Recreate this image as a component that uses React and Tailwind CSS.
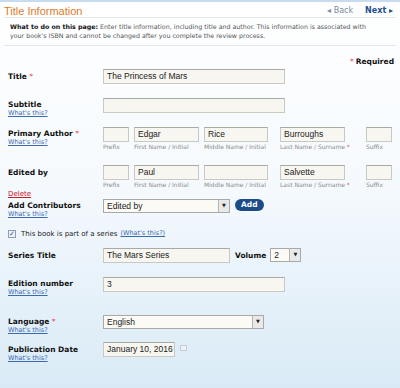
import React from "react";

const Star = () => <span className="text-[#e0484f] font-normal"> *</span>;

const WhatsThis = () => (
  <a className="block text-[6.5px] leading-[9px] text-[#3a6ab0] underline font-normal">What's this?</a>
);

const Input = ({ value = "", w, className = "" }) => (
  <div
    className={`h-[15px] border border-[#c9c9c4] border-t-[#a9a9a4] bg-[#f7f6f0] px-[3px] text-[8.5px] leading-[13px] text-[#222] whitespace-nowrap overflow-hidden ${className}`}
    style={{ width: w, fontFamily: "'Liberation Sans', Arial, sans-serif" }}>
    {value}
  </div>
);

const Select = ({ value, w }) => (
  <div className="flex h-[14px] border border-[#a9a9a9] bg-[#fbfaf4]" style={{ width: w }}>
    <div className="flex-1 px-[3px] text-[8.5px] leading-[12px] text-[#222]" style={{ fontFamily: "'Liberation Sans', Arial, sans-serif" }}>
      {value}
    </div>
    <div className="w-[11px] border-l border-[#b5b5b5] bg-[#e9e9e9] flex items-center justify-center text-[5px] text-[#222]">▼</div>
  </div>
);

const Label = ({ children, star, what, className = "" }) => (
  <div className={`w-[95px] shrink-0 font-bold text-[7.5px] leading-[9px] text-[#111] ${className}`}>
    <div>
      {children}
      {star && <Star />}
    </div>
    {what && <WhatsThis />}
  </div>
);

const Caption = ({ children, w, star }) => (
  <div className="text-[6px] leading-[8px] text-[#8a8a8a] whitespace-nowrap" style={{ width: w }}>
    {children}
    {star && <span className="text-[#e0484f]"> *</span>}
  </div>
);

const NameRow = ({ first, middle, last }) => (
  <div className="flex">
    <div className="flex flex-col gap-[1px] mr-[5px]">
      <Input w={26} />
      <Caption w={26}>Prefix</Caption>
    </div>
    <div className="flex flex-col gap-[1px] mr-[5px]">
      <Input w={65} value={first} />
      <Caption w={65}>First Name / Initial</Caption>
    </div>
    <div className="flex flex-col gap-[1px] mr-[12px]">
      <Input w={64} value={middle} />
      <Caption w={64}>Middle Name / Initial</Caption>
    </div>
    <div className="flex flex-col gap-[1px] mr-[21px]">
      <Input w={65} value={last} />
      <Caption w={65} star>Last Name / Surname</Caption>
    </div>
    <div className="flex flex-col gap-[1px]">
      <Input w={26} />
      <Caption w={26}>Suffix</Caption>
    </div>
  </div>
);

export default function App() {
  return (
    <div
      className="w-[400px] h-[388px] overflow-hidden bg-gradient-to-b from-white via-[#f4f9fd] to-[#d9eaf6] border-t-2 border-[#c9dbee]"
      style={{ fontFamily: "'DejaVu Sans', Verdana, sans-serif" }}>
      {/* header */}
      <div className="flex items-center justify-between pl-[4px] pr-[7px] h-[15px]">
        <div className="text-[11px] text-[#e07b2a] mt-[3px]" style={{ fontFamily: "'Liberation Sans', Arial, sans-serif" }}>
          Title Information
        </div>
        <div className="flex items-center gap-[12px] text-[8px] mt-[3px]">
          <span className="text-[#7a8aa0]">◂ Back</span>
          <span className="text-[#1e4f8e] font-bold">Next ▸</span>
        </div>
      </div>
      <div className="mx-[4px] border-t border-b border-[#e3e6ea] pl-[6px] pt-[4px] pb-[5px] text-[6.3px] leading-[9px] text-[#555] whitespace-nowrap">
        <span className="font-bold text-[#111]">What to do on this page:</span> Enter title information, including title and author. This information is associated with
        <br />
        your book's ISBN and cannot be changed after you complete the review process.
      </div>

      <div className="flex justify-end items-center h-[10px] pr-[6px] mt-[11px] text-[7.5px] font-bold text-[#111]">
        <span className="text-[#e0484f] font-normal mr-[2px]">*</span>Required
      </div>

      <div className="pl-[8px] mt-[2px]">
        {/* Title */}
        <div className="flex h-[29px]">
          <Label star className="pt-[3px]">Title</Label>
          <Input w={182} value="The Princess of Mars" />
        </div>

        {/* Subtitle */}
        <div className="flex h-[29px]">
          <Label what className="pt-[2px]">Subtitle</Label>
          <Input w={182} />
        </div>

        {/* Primary Author */}
        <div className="flex h-[38px]">
          <Label star what className="pt-[2px]">Primary Author</Label>
          <NameRow first="Edgar" middle="Rice" last="Burroughs" />
        </div>

        {/* Edited by */}
        <div className="flex h-[24px]">
          <Label className="pt-[3px]">Edited by</Label>
          <NameRow first="Paul" middle="" last="Salvette" />
        </div>

        <div className="h-[10px] text-[7px] leading-[10px] text-[#c8202a] underline">Delete</div>

        {/* Add contributors */}
        <div className="flex h-[30px]">
          <Label what className="pt-[2px]">Add Contributors</Label>
          <div className="flex items-start gap-[5px]">
            <Select w={127} value="Edited by" />
            <div className="h-[12px] px-[6px] rounded-full bg-[#1d4c88] text-white text-[7.5px] font-bold leading-[12px]">Add</div>
          </div>
        </div>

        {/* checkbox */}
        <div className="flex items-center h-[10px] text-[7px] text-[#222]">
          <div className="w-[8px] h-[8px] border border-[#8d9db5] bg-[#eef2fa] flex items-center justify-center text-[7px] leading-none text-[#3a4f8a] mr-[5px]">✓</div>
          <span>This book is part of a series</span>
          <span className="ml-[3px] text-[#3a6ab0] underline text-[6.5px]">(What's this?)</span>
        </div>

        {/* Series title */}
        <div className="flex h-[29px] mt-[9px]">
          <Label className="pt-[3px]">Series Title</Label>
          <Input w={127} value="The Mars Series" />
          <div className="ml-[5px] mr-[4px] pt-[3px] font-bold text-[7.5px] leading-[9px] text-[#111]">Volume</div>
          <Select w={31} value="2" />
        </div>

        {/* Edition */}
        <div className="flex h-[38px]">
          <Label what className="pt-[2px]">Edition number</Label>
          <Input w={182} value="3" />
        </div>

        {/* Language */}
        <div className="flex h-[27px]">
          <Label star what className="pt-[2px]">Language</Label>
          <Select w={161} value="English" />
        </div>

        {/* Publication date */}
        <div className="flex h-[24px]">
          <Label what className="pt-[3px]">Publication Date</Label>
          <Input w={72} value="January 10, 2016" />
          <div className="ml-[5px] mt-[3px] w-[7px] h-[6px] border border-[#c4ccd6] bg-[#eef1f5]" />
        </div>
      </div>
    </div>
  );
}
